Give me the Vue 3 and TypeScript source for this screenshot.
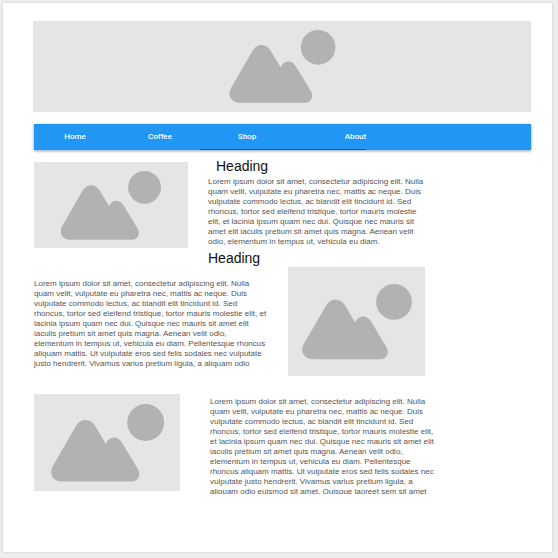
<script setup lang="ts">
import { defineComponent, h } from 'vue'

interface NavItem {
  label: string
  href: string
}

const navItems: NavItem[] = [
  { label: 'Home', href: '#home' },
  { label: 'Coffee', href: '#coffee' },
  { label: 'Shop', href: '#shop' },
  { label: 'About', href: '#about' },
]

const MOUNTAINS =
  'M32 227C6 227 -7 203 5 182L73 64C87 41 116 41 130 66L160 116C170 94 194 92 207 112L254 190C265 208 254 227 236 227Z'

const Picture = defineComponent({
  name: 'PlaceholderPicture',
  setup: () => () =>
    h('div', { role: 'img', 'aria-label': 'Placeholder' }, [
      h('svg', { viewBox: '0 0 330 227', width: '80%', height: '80%', fill: '#b2b2b2', overflow: 'visible' }, [
        h('path', { d: MOUNTAINS }),
        h('circle', { cx: 277, cy: 54, r: 54 }),
      ]),
    ]),
})

const introText = `Lorem ipsum dolor sit amet, consectetur adipiscing elit. Nulla
quam velit, vulputate eu pharetra nec, mattis ac neque. Duis
vulputate commodo lectus, ac blandit elit tincidunt id. Sed
rhoncus, tortor sed eleifend tristique, tortor mauris molestie
elit, et lacinia ipsum quam nec dui. Quisque nec mauris sit
amet elit iaculis pretium sit amet quis magna. Aenean velit
odio, elementum in tempus ut, vehicula eu diam.`

const storyText = `Lorem ipsum dolor sit amet, consectetur adipiscing elit. Nulla
quam velit, vulputate eu pharetra nec, mattis ac neque. Duis
vulputate commodo lectus, ac blandit elit tincidunt id. Sed
rhoncus, tortor sed eleifend tristique, tortor mauris molestie elit, et
lacinia ipsum quam nec dui. Quisque nec mauris sit amet elit
iaculis pretium sit amet quis magna. Aenean velit odio,
elementum in tempus ut, vehicula eu diam. Pellentesque rhoncus
aliquam mattis. Ut vulputate eros sed felis sodales nec vulputate
justo hendrerit. Vivamus varius pretium ligula, a aliquam odio`

const closingText = `Lorem ipsum dolor sit amet, consectetur adipiscing elit. Nulla
quam velit, vulputate eu pharetra nec, mattis ac neque. Duis
vulputate commodo lectus, ac blandit elit tincidunt id. Sed
rhoncus, tortor sed eleifend tristique, tortor mauris molestie elit,
et lacinia ipsum quam nec dui. Quisque nec mauris sit amet elit
iaculis pretium sit amet quis magna. Aenean velit odio,
elementum in tempus ut, vehicula eu diam. Pellentesque
rhoncus aliquam mattis. Ut vulputate eros sed felis sodales nec
vulputate justo hendrerit. Vivamus varius pretium ligula, a
aliquam odio euismod sit amet. Quisque laoreet sem sit amet`
</script>

<template>
  <div class="page">
    <Picture class="picture hero" />

    <nav class="nav">
      <a v-for="item in navItems" :key="item.label" :href="item.href">{{ item.label }}</a>
    </nav>

    <main>
      <section class="row intro">
        <Picture class="picture" />
        <div class="copy">
          <h2 class="indented">Heading</h2>
          <p>{{ introText }}</p>
          <h2 class="next">Heading</h2>
        </div>
      </section>

      <section class="row story">
        <p>{{ storyText }}</p>
        <Picture class="picture" />
      </section>

      <section class="row closing">
        <Picture class="picture" />
        <p>{{ closingText }}</p>
      </section>
    </main>
  </div>
</template>

<style>
body {
  margin: 0;
  background: #ededed;
}
</style>

<style scoped>
.page {
  margin: 3px 6px 6px 3px;
  padding: 18px 21px 58px 31px;
  background: #fff;
  box-shadow: 0 0 2px #c4c4c4;
  font-family: "Liberation Sans", Arial, sans-serif;
}

.picture {
  display: flex;
  align-items: center;
  justify-content: center;
  background: #e5e5e5;
}

.hero {
  height: 91px;
  margin-left: -1px;
}

.nav {
  position: relative;
  display: grid;
  grid-template-columns: 82fr 88fr 86fr 131fr 110fr;
  height: 26px;
  margin-top: 12px;
  background: #2196f3;
  box-shadow: 0 1px 3px #8c9cb4;
}

.nav::after {
  content: "";
  position: absolute;
  left: 33.5%;
  bottom: 0;
  width: 33.3%;
  height: 1px;
  background: #1259a8;
}

.nav a {
  color: #fff;
  font: 500 8px/26px Roboto, sans-serif;
  text-align: center;
  text-decoration: none;
}

.row {
  display: grid;
  align-items: start;
}

.intro {
  grid-template-columns: 154fr 323fr;
  column-gap: 20px;
  margin-top: 8px;
}

.intro .picture {
  height: 86px;
  margin-top: 4px;
}

h2 {
  margin: 0;
  color: #111;
  font-size: 14px;
  font-weight: 400;
  line-height: 16px;
}

.indented {
  padding-left: 8px;
}

.next {
  margin-top: 3px;
}

p {
  margin: 0;
  color: #555;
  font-size: 8px;
  line-height: 10px;
  white-space: pre-line;
}

.intro p {
  margin-top: 3px;
}

.story {
  grid-template-columns: 234fr 137fr;
  column-gap: 20px;
  margin-top: 1px;
  padding-right: 21.3%;
}

.story p {
  margin-top: 12px;
}

.story .picture {
  height: 109px;
}

.closing {
  grid-template-columns: 146fr 321fr;
  column-gap: 30px;
  margin-top: 18px;
}

.closing p {
  height: 97px;
  margin-top: 3px;
  overflow: hidden;
}

.closing .picture {
  height: 97px;
}
</style>
